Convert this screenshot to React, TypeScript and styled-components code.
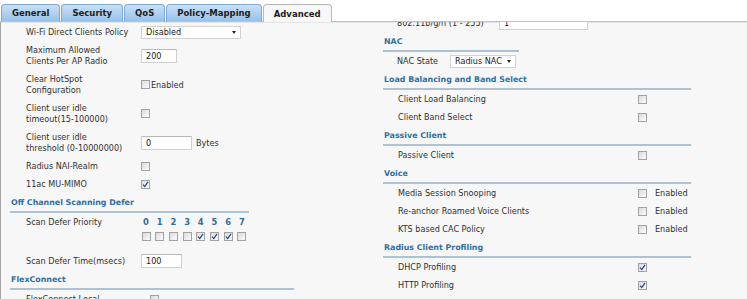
import React from 'react';
import styled, { createGlobalStyle } from 'styled-components';

const GlobalStyle = createGlobalStyle`
	html, body { margin: 0; padding: 0; background: #fff; }
	body {
		font-family: "DejaVu Sans", Verdana, sans-serif;
		font-size: 8.1px;
		color: #303030;
	}
`;

const Page = styled.div`
	width: 747px;
	height: 299px;
	overflow: hidden;
	display: flex;
	flex-direction: column;
`;

const TabBar = styled.div`
	height: 22px;
	box-sizing: border-box;
	display: flex;
	align-items: flex-end;
	gap: 1px;
	padding-left: 1px;
	border-bottom: 1px solid #c2c2c2;
	flex-shrink: 0;
`;

const Tab = styled.div<{ $active?: boolean }>`
	height: 18px;
	box-sizing: border-box;
	margin-bottom: -1px;
	padding: 0 10px;
	display: flex;
	align-items: center;
	font-weight: bold;
	font-size: 8.5px;
	color: #1c1c1c;
	border-radius: 4px 4px 0 0;
	border: 1px solid ${(p) => (p.$active ? '#b8b8b8' : '#7ea9d4')};
	border-bottom: ${(p) => (p.$active ? 'none' : '1px solid #c2c2c2')};
	background: ${(p) => (p.$active ? '#f7f7f7' : 'linear-gradient(#c9e0f5, #97c2ea)')};
`;

const Content = styled.div`
	flex: 1;
	display: flex;
	background: #f7f7f7;
	border-left: 1px solid #a4a4a4;
	box-shadow: inset 0 1px 0 #e4e4e4;
	overflow: hidden;
`;

const LeftCol = styled.div`
	width: 382px;
	box-sizing: border-box;
	padding: 1px 0 0 9px;
	flex-shrink: 0;
`;

const RightCol = styled.div`
	flex: 1;
	overflow: hidden;
`;

const RightInner = styled.div`
	margin-top: -8px;
`;

const SectionTitle = styled.div<{ $width: number }>`
	width: ${(p) => p.$width}px;
	height: 18px;
	line-height: 19px;
	padding-left: 1px;
	font-weight: bold;
	font-size: 7.9px;
	color: #2f6f9e;
	border-bottom: 2px solid #adc2d3;
`;

const Row = styled.div<{ $label: number; $indent: number; $tall?: boolean }>`
	display: grid;
	grid-template-columns: ${(p) => p.$label}px auto;
	align-items: center;
	height: ${(p) => (p.$tall ? 29 : 18)}px;
	padding-left: ${(p) => p.$indent}px;
`;

const TopRow = styled(Row)`
	align-items: start;
	height: 39px;
`;

const Label = styled.div`
	line-height: 10.5px;
`;

const TopLabel = styled.div`
	line-height: 18px;
`;

const Control = styled.div<{ $gap?: number }>`
	display: flex;
	align-items: center;
	gap: ${(p) => p.$gap ?? 4}px;
`;

const TextBox = styled.input<{ $w: number }>`
	width: ${(p) => p.$w}px;
	height: 14px;
	box-sizing: border-box;
	margin: 0;
	padding: 0 0 0 4px;
	border: 1px solid #cfcfcf;
	border-top-color: #b9b9b9;
	background: #fff;
	font: inherit;
	color: #202020;
	outline: none;
`;

const SelectBox = styled.div<{ $w: number }>`
	width: ${(p) => p.$w}px;
	height: 13px;
	box-sizing: border-box;
	display: flex;
	align-items: center;
	justify-content: space-between;
	padding: 0 4px 0 4px;
	border: 1px solid #d2d2d2;
	background: #fff;
	color: #202020;
`;

const Arrow = styled.span`
	width: 0;
	height: 0;
	border-left: 2.5px solid transparent;
	border-right: 2.5px solid transparent;
	border-top: 3px solid #222;
`;

const Box = styled.span`
	width: 9px;
	height: 9px;
	box-sizing: border-box;
	display: inline-flex;
	border: 1px solid #a2a2a2;
	background: linear-gradient(135deg, #dadada, #fcfcfc);
`;

const PriorityGrid = styled.div`
	display: grid;
	grid-template-columns: repeat(8, 10px);
	grid-template-rows: 18px 10px;
	column-gap: 3.7px;
	justify-items: center;
	align-items: center;
`;

const Digit = styled.span`
	font-weight: bold;
	font-size: 8.4px;
	color: #2f6f9e;
`;

const Check = ({ on }: { on?: boolean }) => (
	<Box>
		{on && (
			<svg width="7" height="7" viewBox="0 0 7 7">
				<path d="M1 3.6 L2.8 5.6 L6 0.8" fill="none" stroke="#2a3f86" strokeWidth="1.2" />
			</svg>
		)}
	</Box>
);

const tabs = ['General', 'Security', 'QoS', 'Policy-Mapping', 'Advanced'];

const L = { label: 115, indent: 16 };
const R = { label: 240, indent: 15 };

export default function App() {
	return (
		<>
			<GlobalStyle />
			<Page>
				<TabBar>
					{tabs.map((t) => (
						<Tab key={t} $active={t === 'Advanced'}>
							{t}
						</Tab>
					))}
				</TabBar>
				<Content>
					<LeftCol>
						<Row $label={L.label} $indent={L.indent}>
							<Label>Wi-Fi Direct Clients Policy</Label>
							<SelectBox $w={100}>
								Disabled <Arrow />
							</SelectBox>
						</Row>
						<Row $label={L.label} $indent={L.indent} $tall>
							<Label>
								Maximum Allowed
								<br />
								Clients Per AP Radio
							</Label>
							<TextBox $w={36} readOnly defaultValue="200" />
						</Row>
						<Row $label={L.label} $indent={L.indent} $tall>
							<Label>
								Clear HotSpot
								<br />
								Configuration
							</Label>
							<Control $gap={1}>
								<Check />
								Enabled
							</Control>
						</Row>
						<Row $label={L.label} $indent={L.indent} $tall>
							<Label>
								Client user idle
								<br />
								timeout(15-100000)
							</Label>
							<Control>
								<Check />
							</Control>
						</Row>
						<Row $label={L.label} $indent={L.indent} $tall>
							<Label>
								Client user idle
								<br />
								threshold (0-10000000)
							</Label>
							<Control $gap={4}>
								<TextBox $w={51} readOnly defaultValue="0" />
								Bytes
							</Control>
						</Row>
						<Row $label={L.label} $indent={L.indent}>
							<Label>Radius NAI-Realm</Label>
							<Control>
								<Check />
							</Control>
						</Row>
						<Row $label={L.label} $indent={L.indent}>
							<Label>11ac MU-MIMO</Label>
							<Control>
								<Check on />
							</Control>
						</Row>

						<SectionTitle $width={238}>Off Channel Scanning Defer</SectionTitle>
						<TopRow $label={L.label} $indent={L.indent}>
							<TopLabel>Scan Defer Priority</TopLabel>
							<PriorityGrid>
								{[0, 1, 2, 3, 4, 5, 6, 7].map((n) => (
									<Digit key={'d' + n}>{n}</Digit>
								))}
								{[0, 1, 2, 3, 4, 5, 6, 7].map((n) => (
									<Check key={'c' + n} on={n >= 4 && n <= 6} />
								))}
							</PriorityGrid>
						</TopRow>
						<Row $label={L.label} $indent={L.indent}>
							<Label>Scan Defer Time(msecs)</Label>
							<TextBox $w={41} readOnly defaultValue="100" />
						</Row>

						<SectionTitle $width={283}>FlexConnect</SectionTitle>
						<Row $label={L.label + 9} $indent={L.indent}>
							<Label>FlexConnect Local</Label>
							<Control>
								<Check />
							</Control>
						</Row>
					</LeftCol>

					<RightCol>
						<RightInner>
							<Row $label={102} $indent={14}>
								<Label>802.11b/g/n (1 - 255)</Label>
								<TextBox $w={89} readOnly defaultValue="1" />
							</Row>

							<SectionTitle $width={135}>NAC</SectionTitle>
							<Row $label={53} $indent={14}>
								<Label>NAC State</Label>
								<SelectBox $w={66}>
									Radius NAC <Arrow />
								</SelectBox>
							</Row>

							<SectionTitle $width={307}>Load Balancing and Band Select</SectionTitle>
							<Row $label={R.label} $indent={R.indent}>
								<Label>Client Load Balancing</Label>
								<Control>
									<Check />
								</Control>
							</Row>
							<Row $label={R.label} $indent={R.indent}>
								<Label>Client Band Select</Label>
								<Control>
									<Check />
								</Control>
							</Row>

							<SectionTitle $width={307}>Passive Client</SectionTitle>
							<Row $label={R.label} $indent={R.indent}>
								<Label>Passive Client</Label>
								<Control>
									<Check />
								</Control>
							</Row>

							<SectionTitle $width={307}>Voice</SectionTitle>
							{['Media Session Snooping', 'Re-anchor Roamed Voice Clients', 'KTS based CAC Policy'].map(
								(t) => (
									<Row key={t} $label={R.label} $indent={R.indent}>
										<Label>{t}</Label>
										<Control $gap={8}>
											<Check />
											Enabled
										</Control>
									</Row>
								)
							)}

							<SectionTitle $width={307}>Radius Client Profiling</SectionTitle>
							<Row $label={R.label} $indent={R.indent}>
								<Label>DHCP Profiling</Label>
								<Control>
									<Check on />
								</Control>
							</Row>
							<Row $label={R.label} $indent={R.indent}>
								<Label>HTTP Profiling</Label>
								<Control>
									<Check on />
								</Control>
							</Row>
						</RightInner>
					</RightCol>
				</Content>
			</Page>
		</>
	);
}
